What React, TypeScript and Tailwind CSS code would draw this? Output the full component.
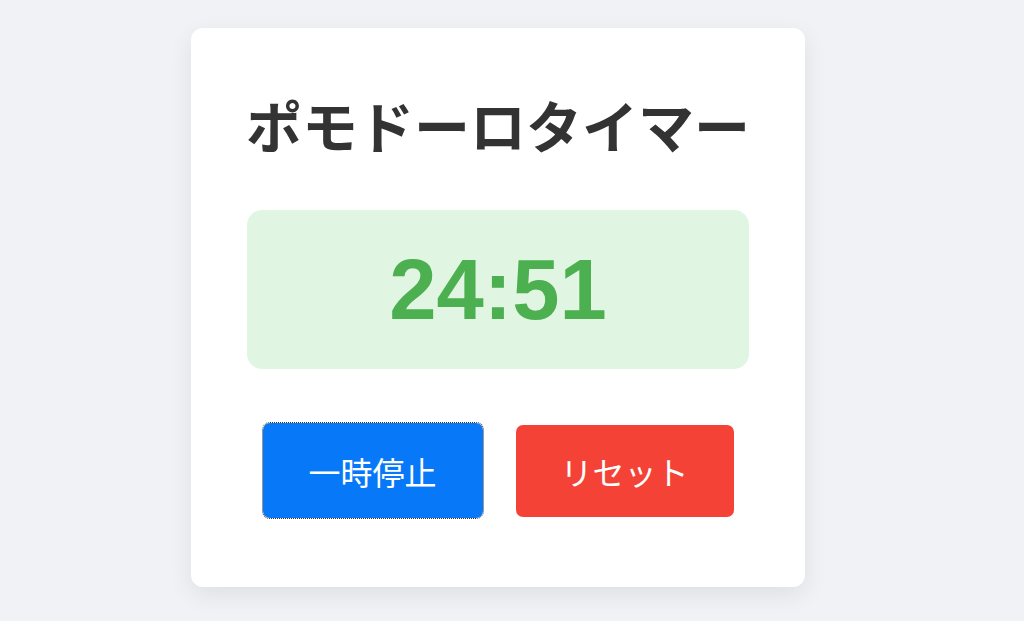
export default function App() {
  return (
    <div className="flex min-h-screen justify-center bg-[#f0f2f5] pt-[28px] pr-[28px]">
      <div className="h-fit w-[614px] rounded-xl bg-white px-[56px] pt-[64px] pb-[69px] shadow-[0_8px_24px_rgba(0,0,0,0.08)]">
        <h1 className="-mx-4 whitespace-nowrap text-center font-['Noto_Sans_CJK_JP',sans-serif] text-[56px] font-bold leading-[64px] text-[#333333]">
          ポモドーロタイマー
        </h1>
        <div className="mt-[54px] flex h-[159px] items-center justify-center rounded-[15px] bg-[#e1f6e2]">
          <span className="font-['Liberation_Sans',Arial,sans-serif] text-[85px] font-bold leading-none text-[#4caf50]">
            24:51
          </span>
        </div>
        <div className="mt-[54px] flex h-[95px] items-center justify-center gap-[33px] font-['Noto_Sans_CJK_JP',sans-serif]">
          <button
            type="button"
            className="h-[95px] w-[220px] rounded-[7px] bg-[#0779f8] text-[32px] text-white outline-1 outline-dotted outline-[#333]"
          >
            一時停止
          </button>
          <button
            type="button"
            className="h-[92px] w-[218px] rounded-[7px] bg-[#f44336] text-[32px] text-white"
          >
            リセット
          </button>
        </div>
      </div>
    </div>
  );
}
